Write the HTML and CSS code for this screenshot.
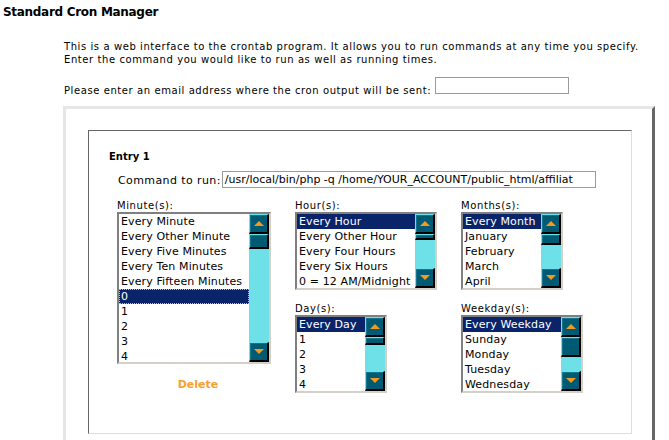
FILE: index.html
```html
<!DOCTYPE html>
<html>
<head>
<meta charset="utf-8">
<title>Standard Cron Manager</title>
<link rel="stylesheet" href="styles.css">
</head>
<body>
<h1 class="title">Standard Cron Manager</h1>
<div class="intro">
  <p class="desc">This is a web interface to the crontab program. It allows you to run commands at any time you specify.<br>Enter the command you would like to run as well as running times.</p>
  <p class="email">Please enter an email address where the cron output will be sent: <span class="input email-input"></span></p>
  <div class="outer">
    <div class="inner">
      <div class="entry">Entry 1</div>
      <div class="cmd">
        <span class="cmd-label">Command to run:</span>
        <span class="input cmd-input">/usr/local/bin/php -q /home/YOUR_ACCOUNT/public_html/affiliat</span>
      </div>
      <div class="fields">
        <div class="col col1">
          <div class="field">
            <div class="label">Minute(s):</div>
            <div class="listbox lb-minute">
              <div class="items">
                <div class="item">Every Minute</div>
                <div class="item">Every Other Minute</div>
                <div class="item">Every Five Minutes</div>
                <div class="item">Every Ten Minutes</div>
                <div class="item">Every Fifteen Minutes</div>
                <div class="item sel focus">0</div>
                <div class="item">1</div>
                <div class="item">2</div>
                <div class="item">3</div>
                <div class="item">4</div>
              </div>
              <div class="sb">
                <div class="btn up"><i class="arrow-up"></i></div>
                <div class="btn thumb" style="height:15px"></div>
                <div class="track"></div>
                <div class="btn down"><i class="arrow-down"></i></div>
              </div>
            </div>
          </div>
          <div class="delete">Delete</div>
        </div>
        <div class="col col2">
          <div class="field">
            <div class="label">Hour(s):</div>
            <div class="listbox lb-hour">
              <div class="items">
                <div class="item sel">Every Hour</div>
                <div class="item">Every Other Hour</div>
                <div class="item">Every Four Hours</div>
                <div class="item">Every Six Hours</div>
                <div class="item">0 = 12 AM/Midnight</div>
              </div>
              <div class="sb">
                <div class="btn up"><i class="arrow-up"></i></div>
                <div class="btn thumb" style="height:6px"></div>
                <div class="track"></div>
                <div class="btn down"><i class="arrow-down"></i></div>
              </div>
            </div>
          </div>
          <div class="field field-low">
            <div class="label">Day(s):</div>
            <div class="listbox lb-day">
              <div class="items">
                <div class="item sel">Every Day</div>
                <div class="item">1</div>
                <div class="item">2</div>
                <div class="item">3</div>
                <div class="item">4</div>
              </div>
              <div class="sb">
                <div class="btn up"><i class="arrow-up"></i></div>
                <div class="btn thumb" style="height:8px"></div>
                <div class="track"></div>
                <div class="btn down"><i class="arrow-down"></i></div>
              </div>
            </div>
          </div>
        </div>
        <div class="col col3">
          <div class="field">
            <div class="label">Months(s):</div>
            <div class="listbox lb-month">
              <div class="items">
                <div class="item sel">Every Month</div>
                <div class="item">January</div>
                <div class="item">February</div>
                <div class="item">March</div>
                <div class="item">April</div>
              </div>
              <div class="sb">
                <div class="btn up"><i class="arrow-up"></i></div>
                <div class="btn thumb" style="height:11px"></div>
                <div class="track"></div>
                <div class="btn down"><i class="arrow-down"></i></div>
              </div>
            </div>
          </div>
          <div class="field field-low">
            <div class="label">Weekday(s):</div>
            <div class="listbox lb-weekday">
              <div class="items">
                <div class="item sel">Every Weekday</div>
                <div class="item">Sunday</div>
                <div class="item">Monday</div>
                <div class="item">Tuesday</div>
                <div class="item">Wednesday</div>
              </div>
              <div class="sb">
                <div class="btn up"><i class="arrow-up"></i></div>
                <div class="btn thumb" style="height:20px"></div>
                <div class="track"></div>
                <div class="btn down"><i class="arrow-down"></i></div>
              </div>
            </div>
          </div>
        </div>
      </div>
    </div>
  </div>
</div>
</body>
</html>
```
FILE: styles.css
```css
html, body {
  margin: 0;
  padding: 0;
  background: #fff;
}
body {
  font-family: "DejaVu Sans", Verdana, sans-serif;
  font-size: 10px;
  color: #000;
  overflow: hidden;
}
.title {
  margin: 0;
  padding: 5px 0 0 3px;
  font-size: 12px;
  line-height: 15px;
  font-weight: bold;
  letter-spacing: -0.3px;
}
.intro {
  padding-left: 64px;
}
.desc {
  margin: 20px 0 0;
  line-height: 13px;
  letter-spacing: 0.58px;
}
.email {
  margin: 11px 0 0;
  line-height: 13px;
  letter-spacing: 0.58px;
}
.input {
  display: inline-block;
  box-sizing: border-box;
  border: 1px solid #9a9a9a;
  background: #fff;
  vertical-align: baseline;
  letter-spacing: 0;
}
.email-input {
  width: 134px;
  height: 17px;
  margin-left: 0;
}
.outer {
  margin-top: 9px;
  margin-left: -1px;
  width: 592px;
  box-sizing: border-box;
  border: 3px solid;
  border-color: #e6e6e6 #666 #666 #e6e6e6;
  padding: 21px 20px 20px 22px;
}
.inner {
  border: 1px solid;
  border-color: #666 #ddd #ddd #666;
  padding: 20px 0 40px 20px;
}
.entry {
  font-weight: bold;
  line-height: 12px;
}
.cmd {
  display: flex;
  align-items: flex-end;
  margin-top: 8px;
  padding-left: 9px;
}
.cmd-label {
  font-size: 11px;
  line-height: 13px;
  letter-spacing: 0.4px;
  margin-right: 1px;
  padding-bottom: 1px;
}
.cmd-input {
  width: 374px;
  height: 17px;
  font-size: 11px;
  line-height: 15px;
  padding-left: 2px;
  white-space: nowrap;
  overflow: hidden;
  color: #000;
}
.fields {
  display: flex;
  gap: 24px;
  margin-top: 12px;
  padding-left: 8px;
}
.col {
  display: flex;
  flex-direction: column;
}
.col1 { width: 154px; }
.col2 { width: 142px; }
.col3 { width: 122px; }
.label {
  line-height: 12px;
  letter-spacing: 0.6px;
}
.field-low {
  margin-top: 13px;
}
.listbox {
  display: flex;
  box-sizing: border-box;
  border: 2px solid;
  border-color: #808080 #d4d0c8 #d4d0c8 #808080;
  background: #fff;
  overflow: hidden;
}
.lb-minute { width: 154px; height: 152px; }
.lb-hour { width: 142px; height: 78px; }
.lb-month { width: 102px; height: 78px; }
.lb-day { width: 92px; height: 78px; }
.lb-weekday { width: 122px; height: 78px; }
.items {
  flex: 1;
  min-width: 0;
  overflow: hidden;
}
.item {
  height: 15px;
  line-height: 15px;
  font-size: 11px;
  padding-left: 2px;
  letter-spacing: 0.12px;
  white-space: nowrap;
  box-sizing: border-box;
}
.item.sel {
  background: #0a246a;
  color: #fff;
}
.item.focus {
  outline: 1px dotted #e0c060;
  outline-offset: -1px;
}
.sb {
  width: 20px;
  flex: none;
  display: flex;
  flex-direction: column;
  background: #6de0e8;
}
.btn {
  box-sizing: border-box;
  flex: none;
  background: #005a73;
  border-style: solid;
  border-width: 1px 2px 2px 1px;
  border-color: #6de0e8 #000 #000 #6de0e8;
  box-shadow: inset 1px 1px 0 #0d7890;
  display: flex;
  align-items: center;
  justify-content: center;
}
.btn.up, .btn.down {
  height: 20px;
}
.track {
  flex: 1;
}
.arrow-up {
  width: 0;
  height: 0;
  border-left: 5px solid transparent;
  border-right: 5px solid transparent;
  border-bottom: 5px solid #f39a1c;
}
.arrow-down {
  width: 0;
  height: 0;
  border-left: 5px solid transparent;
  border-right: 5px solid transparent;
  border-top: 5px solid #f39a1c;
}
.delete {
  margin-top: 14px;
  text-align: center;
  padding-left: 8px;
  color: #f7a030;
  font-weight: bold;
  font-size: 11px;
  line-height: 14px;
}
```
